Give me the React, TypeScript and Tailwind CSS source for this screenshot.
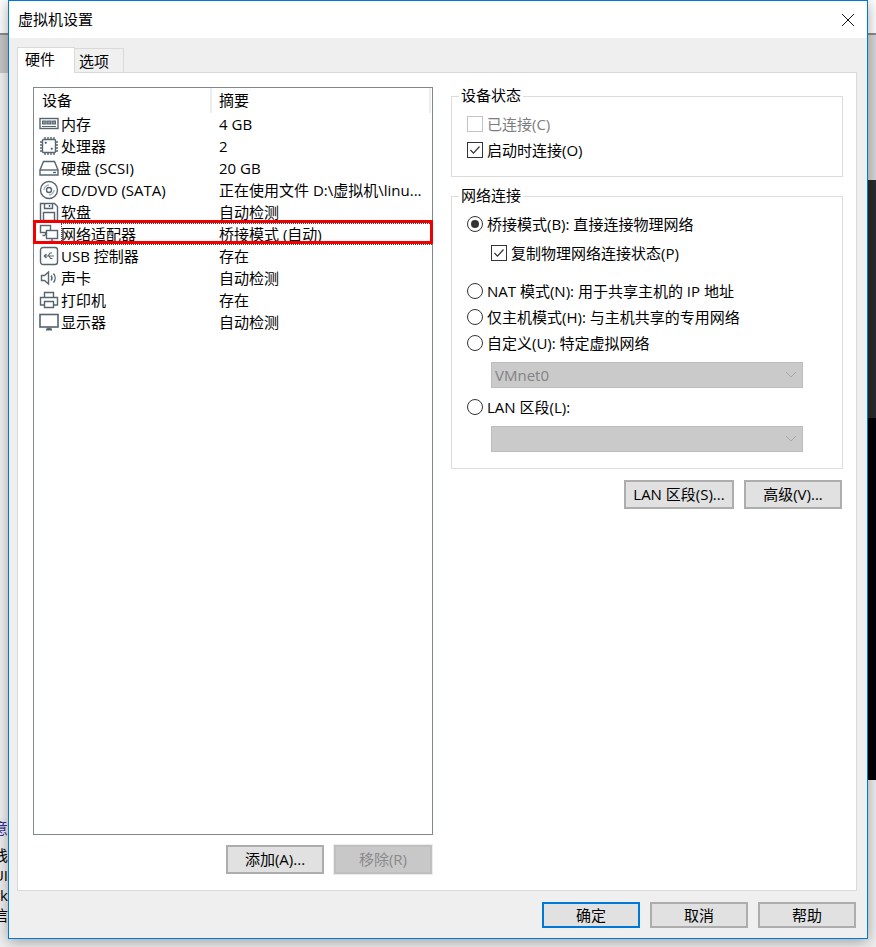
import type { ReactNode } from 'react'

const FONT = "font-['Open_Sans','Noto_Sans_CJK_SC',sans-serif]"

const S = { fill: 'none', stroke: '#56656f', strokeWidth: 1.4 }

const ICONS: Record<string, ReactNode> = {
  memory: (
    <g {...S}>
      <rect x="1" y="4.5" width="18" height="10" />
      <rect x="3.5" y="7" width="3.5" height="3" fill="#8b99a3" strokeWidth="1" />
      <rect x="8.2" y="7" width="3.5" height="3" fill="#8b99a3" strokeWidth="1" />
      <rect x="13" y="7" width="3.5" height="3" fill="#8b99a3" strokeWidth="1" />
      <path d="M3 12.5h14" strokeWidth="1" />
    </g>
  ),
  cpu: (
    <g {...S}>
      <rect x="3.5" y="3.5" width="13" height="13" rx="1" />
      <path d="M6 1v2M9 1v2M12 1v2M15 1v2M6 17v2M9 17v2M12 17v2M15 17v2M1 6h2M1 9h2M1 12h2M1 15h2M17 6h2M17 9h2M17 12h2M17 15h2" />
      <rect x="6" y="6" width="1.5" height="1.5" fill="#56656f" strokeWidth="0.5" />
      <rect x="12" y="12" width="1.5" height="1.5" fill="#56656f" strokeWidth="0.5" />
    </g>
  ),
  disk: (
    <g {...S}>
      <path d="M4.5 3.5h11l3.5 8.5v5H1v-5z" />
      <path d="M1 12h18" />
      <path d="M14 14.5h3" />
    </g>
  ),
  cd: (
    <g {...S}>
      <circle cx="10" cy="10" r="8.5" />
      <circle cx="10" cy="10" r="2.5" />
      <path d="M5 10a5 5 0 0 1 5-5M15 10a5 5 0 0 1-5 5" stroke="#a9b3ba" />
    </g>
  ),
  floppy: (
    <g {...S}>
      <path d="M1.5 1.5h14l3 3v14h-17z" />
      <path d="M5.5 1.5v5h8v-5M10.5 3v2" />
      <path d="M4.5 18.5v-8h11v8" />
    </g>
  ),
  network: (
    <g {...S}>
      <rect x="1.5" y="1.5" width="10" height="7" fill="#fff" />
      <path d="M6.5 8.5v2.5M3.5 11.5h3" />
      <rect x="7.5" y="6.5" width="11" height="8" fill="#fff" />
      <path d="M13 14.5v2.5M10 17.5h6" />
    </g>
  ),
  usb: (
    <g {...S}>
      <rect x="1.5" y="1.5" width="17" height="17" rx="2.5" />
      <path d="M5 10h10M5 10l2.5-2M5 10l2.5 2M9 10l2-3h2M10 10l1.5 2.5h2" strokeWidth="1.1" />
    </g>
  ),
  sound: (
    <g {...S}>
      <path d="M2.5 7.5h3l4-3.5v12l-4-3.5h-3z" />
      <path d="M12 7.5a4 4 0 0 1 0 5M14.5 5.5a7 7 0 0 1 0 9" />
    </g>
  ),
  printer: (
    <g {...S}>
      <path d="M5.5 7V2.5h9V7" />
      <path d="M5 15H1.5V7.5h17V15H15" />
      <path d="M5.5 11.5h9v6h-9z" />
    </g>
  ),
  display: (
    <g {...S}>
      <rect x="1" y="2.5" width="18" height="12.5" strokeWidth="1.6" />
      <path d="M7 17.5h6" strokeWidth="2" />
      <path d="M9 15.5v1.5h2v-1.5" />
    </g>
  ),
}

const DEVICES = [
  { icon: 'memory', name: '内存', summary: '4 GB' },
  { icon: 'cpu', name: '处理器', summary: '2' },
  { icon: 'disk', name: '硬盘 (SCSI)', summary: '20 GB' },
  { icon: 'cd', name: 'CD/DVD (SATA)', summary: '正在使用文件 D:\\虚拟机\\linu...' },
  { icon: 'floppy', name: '软盘', summary: '自动检测' },
  { icon: 'network', name: '网络适配器', summary: '桥接模式 (自动)', selected: true },
  { icon: 'usb', name: 'USB 控制器', summary: '存在' },
  { icon: 'sound', name: '声卡', summary: '自动检测' },
  { icon: 'printer', name: '打印机', summary: '存在' },
  { icon: 'display', name: '显示器', summary: '自动检测' },
]

function Btn({ children, width, disabled, primary }: { children: ReactNode; width: string; disabled?: boolean; primary?: boolean }) {
  const look = primary
    ? 'border-2 border-[#0078d7] bg-[#e1e1e1] text-black'
    : disabled
      ? 'border-2 border-[#bfbfbf] bg-[#c8c8c8] text-[#8a8a8a] outline outline-1 outline-[#ececec]'
      : 'border-2 border-[#adadad] bg-[#e1e1e1] text-black'
  return <button className={`${width} h-full flex items-center justify-center text-[15px] ${look}`}>{children}</button>
}

function Check({ checked, disabled }: { checked?: boolean; disabled?: boolean }) {
  return (
    <span className={`w-4 h-4 shrink-0 border bg-white flex items-center justify-center ${disabled ? 'border-[#c4c4c4]' : 'border-[#333]'}`}>
      {checked && (
        <svg width="14" height="14" viewBox="0 0 14 14">
          <path d="M2.5 7l3 3.2L11.5 3.5" fill="none" stroke="#333" strokeWidth="1.2" />
        </svg>
      )}
    </span>
  )
}

function Radio({ checked }: { checked?: boolean }) {
  return (
    <span className="w-4 h-4 shrink-0 rounded-full border border-[#333] bg-white flex items-center justify-center">
      {checked && <span className="w-2 h-2 rounded-full bg-[#333]" />}
    </span>
  )
}

function Select({ value }: { value?: string }) {
  return (
    <div className="ml-[24px] w-[312px] h-[26px] bg-[#cacaca] border border-[#bdbdbd] flex items-center justify-between pl-[3px] pr-[5px] text-[#838383] text-[15px]">
      <span>{value}</span>
      <svg width="12" height="8" viewBox="0 0 12 8">
        <path d="M1 1l5 5 5-5" fill="none" stroke="#a8a8a8" strokeWidth="1" />
      </svg>
    </div>
  )
}

function Group({ title, height, children }: { title: string; height: string; children: ReactNode }) {
  return (
    <div className={`relative ${height} border border-[#dcdcdc]`}>
      <span className="absolute left-[7px] -top-[12px] bg-white px-[2px] leading-[20px] text-[15px]">{title}</span>
      {children}
    </div>
  )
}

function Fragments() {
  const lines = [
    ['意', 'text-[#3b2f9e]', 'mt-0'],
    ['栈', 'text-black', 'mt-[6px]'],
    ['UI', 'text-black', 'mt-[-1px]'],
    ['rk', 'text-black', 'mt-[-1px]'],
    ['信', 'text-black', 'mt-[-1px]'],
  ]
  return (
    <div className="w-full overflow-hidden text-[15px] leading-[21px]">
      {lines.map(([t, c, m]) => (
        <div key={t} className={`w-[8px] flex justify-end whitespace-nowrap ${c} ${m}`}>
          {t}
        </div>
      ))}
    </div>
  )
}

export default function App() {
  return (
    <div className={`relative w-[876px] h-[947px] overflow-hidden bg-[#f1f1f1] text-black flex justify-between ${FONT}`}>
      {/* what lies behind the dialog */}
      <div className="w-[8px] flex flex-col">
        <div className="h-[33px] bg-white" />
        <div className="h-[2px] bg-[#8c8c8c]" />
        <div className="h-[38px] bg-[#c8c8c8]" />
        <div className="h-[745px] bg-[#f4f4f4]" />
        <Fragments />
      </div>
      <div className="w-[8px] flex flex-col">
        <div className="h-[33px] bg-white" />
        <div className="h-[2px] bg-[#8c8c8c]" />
        <div className="h-[145px] bg-[#d8d8d8]" />
        <div className="h-[238px] bg-[#2b2b2b]" />
        <div className="h-[362px] bg-black" />
        <div className="flex-1 bg-[#f0f0f0]" />
      </div>

      {/* dialog */}
      <div className="absolute left-[8px] top-0 w-[860px] h-[939px] border border-[#0078d7] bg-[#efefef] flex flex-col shadow-[0_3px_14px_rgba(0,0,0,0.35)]">
        <div className="h-[37px] shrink-0 bg-white flex items-center justify-between pl-[9px] pr-[12px] text-[15px]">
          <span>虚拟机设置</span>
          <svg width="14" height="14" viewBox="0 0 14 14">
            <path d="M1 1l12 12M13 1L1 13" stroke="#111" strokeWidth="1" />
          </svg>
        </div>

        <div className="flex-1 pl-[8px] pt-[9px] flex flex-col">
          <div className="h-[26px] flex items-end relative z-10 text-[15px]">
            <div className="w-[58px] h-[26px] bg-white border border-b-0 border-[#d9d9d9] pl-[7px] leading-[22px]">硬件</div>
            <div className="w-[50px] h-[24px] -ml-px bg-[#f0f0f0] border border-b-0 border-[#d9d9d9] pl-[4px] leading-[24px] mb-px">选项</div>
          </div>

          <div className="-mt-px w-[840px] h-[819px] bg-white border border-[#d9d9d9] flex pl-[15px] pt-[14px]">
            {/* device list */}
            <div className="w-[400px] flex flex-col">
              <div className="h-[748px] border border-[#82878c] text-[15px]">
                <div className="h-[25px] flex leading-[25px]">
                  <div className="w-[178px] pl-[8px] border-r-2 border-[#ececec]">设备</div>
                  <div className="flex-1 pl-[7px] border-r-2 border-[#ececec] mr-px">摘要</div>
                </div>
                {DEVICES.map((d) => (
                  <div key={d.icon} className="relative h-[22px] flex items-center">
                    <svg width="20" height="20" viewBox="0 0 20 20" className="ml-[5px] mr-[2px] shrink-0">
                      {ICONS[d.icon]}
                    </svg>
                    <div className={`flex-1 flex h-full items-center ${d.selected ? 'outline outline-1 outline-dotted -outline-offset-1 outline-[#444]' : ''}`}>
                      <span className="w-[158px] whitespace-nowrap">{d.name}</span>
                      <span className="whitespace-nowrap">{d.summary}</span>
                    </div>
                    {d.selected && <div className="absolute -left-px -right-px -top-[3px] h-[24px] border-[3px] border-[#f00000]" />}
                  </div>
                ))}
              </div>
              <div className="mt-[10px] h-[29px] flex justify-end gap-[10px] pr-px">
                <Btn width="w-[98px]">添加(A)...</Btn>
                <Btn width="w-[98px]" disabled>移除(R)</Btn>
              </div>
            </div>

            {/* right side */}
            <div className="ml-[18px] w-[392px] pt-[9px] flex flex-col text-[15px]">
              <Group title="设备状态" height="h-[81px]">
                <div className="pl-[15px] pt-[19px] flex flex-col gap-[10px]">
                  <label className="flex items-center gap-[4px] h-4 text-[#7d7d7d]"><Check disabled />已连接(C)</label>
                  <label className="flex items-center gap-[4px] h-4"><Check checked />启动时连接(O)</label>
                </div>
              </Group>
              <div className="h-[19px]" />
              <Group title="网络连接" height="h-[273px]">
                <div className="pl-[15px] pt-[19px] flex flex-col">
                  <label className="flex items-center gap-[4px] h-4"><Radio checked />桥接模式(B): 直接连接物理网络</label>
                  <label className="flex items-center gap-[4px] h-4 ml-[24px] mt-[13px]"><Check checked />复制物理网络连接状态(P)</label>
                  <label className="flex items-center gap-[4px] h-4 mt-[22px]"><Radio />NAT 模式(N): 用于共享主机的 IP 地址</label>
                  <label className="flex items-center gap-[4px] h-4 mt-[10px]"><Radio />仅主机模式(H): 与主机共享的专用网络</label>
                  <label className="flex items-center gap-[4px] h-4 mt-[10px]"><Radio />自定义(U): 特定虚拟网络</label>
                  <div className="mt-[11px]"><Select value="VMnet0" /></div>
                  <label className="flex items-center gap-[4px] h-4 mt-[11px]"><Radio />LAN 区段(L):</label>
                  <div className="mt-[11px]"><Select /></div>
                </div>
              </Group>
              <div className="mt-[11px] h-[29px] flex justify-end gap-[10px] pr-px">
                <Btn width="w-[110px]">LAN 区段(S)...</Btn>
                <Btn width="w-[98px]">高级(V)...</Btn>
              </div>
            </div>
          </div>

          <div className="mt-[11px] h-[26px] w-[840px] flex justify-end gap-[10px] pr-px">
            <Btn width="w-[98px]" primary>确定</Btn>
            <Btn width="w-[98px]">取消</Btn>
            <Btn width="w-[98px]">帮助</Btn>
          </div>
        </div>
      </div>
    </div>
  )
}
